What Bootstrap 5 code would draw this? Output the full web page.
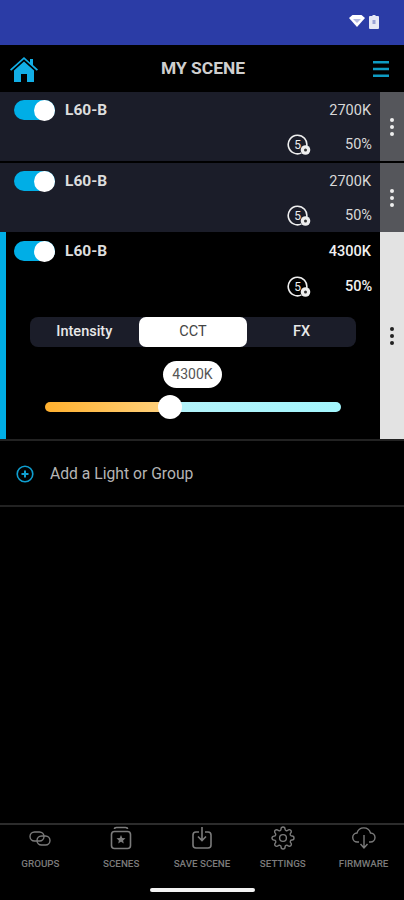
<!DOCTYPE html>
<html lang="en">
<head>
<meta charset="UTF-8">
<meta name="viewport" content="width=device-width, initial-scale=1.0">
<title>My Scene</title>
<link href="https://cdn.jsdelivr.net/npm/bootstrap@5.3.0/dist/css/bootstrap.min.css" rel="stylesheet">
<style>
    body { background: #000; font-family: Roboto, "Liberation Sans", sans-serif; color: #e4e4e4; height: 900px; overflow: hidden; }
    .app-shell { height: 900px; }
    .status-strip { height: 45px; background: #2b3ca6; padding: 15px 25px 0 0; gap: 4px; }
    .top-bar { height: 47px; padding: 0 15px 0 9px; }
    .top-title { font-size: 17.4px; font-weight: 700; color: #cfcfcf; margin-right: 6px; }
    .scene-row { height: 69px; background: #1b1d29; }
    .scene-row.first-row { margin-bottom: 2px; }
    .scene-row.open { height: 207px; background: #000; border-left: 6px solid #00aee6; }
    .row-main { min-width: 0; }
    .row-body { min-width: 0; padding: 8px 9px 0 14px; }
    .open .row-body { padding: 9px 9px 0 8px; }
    .row-line { height: 22px; }
    .row-line2 { height: 22px; margin-top: 12px; }
    .open .row-line2 { margin-top: 13px; }
    .light-name { font-size: 15.5px; font-weight: 700; color: #ddd; margin-left: 10px; }
    .light-val { font-size: 14.5px; color: #d8d8d8; }
    .open .light-val { color: #f0f0f0; font-weight: 500; }
    .val-pct { width: 26px; text-align: right; margin-left: 33px; white-space: nowrap; }
    .sw-track { width: 41px; height: 20px; border-radius: 10px; background: #00aee6; position: relative; top: -1px; }
    .sw-knob { position: absolute; right: 0; top: -0.5px; width: 21px; height: 21px; border-radius: 50%; background: #fff; }
    .more-col { width: 24px; background: #55565b; gap: 3px; }
    .more-col i { display: block; width: 4px; height: 4px; border-radius: 50%; background: #eee; }
    .open .more-col { background: #e3e3e3; }
    .open .more-col i { background: #222; }
    .tab-strip { height: 30px; margin: 19px 24px 0 24px; background: #1b1d29; border-radius: 8px; }
    .tab-item { flex: 1; font-size: 14.5px; font-weight: 500; color: #e8e8e8; border: 0; background: none; padding: 0; line-height: 30px; }
    .tab-item.on { background: #fff; color: #444; border-radius: 7px; font-weight: 400; }
    .cct-bubble { width: 59px; height: 27px; margin: 14px 0 0 157px; background: #fff; color: #555; border-radius: 14px; font-size: 14px; line-height: 27px; text-align: center; }
    .cct-slider { height: 10px; margin: 14px 39px 0 39px; border-radius: 5px; position: relative; background: linear-gradient(90deg, #ffb02e 0, #ffd27f 42%, #b4f3fa 42%, #a3f6fd 100%); }
    .cct-thumb { position: absolute; left: 113px; top: -7px; width: 24px; height: 24px; border-radius: 50%; background: #fff; }
    .add-row { height: 68px; padding: 1px 0 0 16px; border-top: 2px solid #222; border-bottom: 2px solid #222; font-size: 15.7px; color: #b5b5b5; gap: 16px; }
    .foot-bar { height: 77px; border-top: 2px solid #2c2c2c; padding-top: 1px; position: relative; }
    .foot-item { flex: 1; font-size: 9.8px; font-weight: 500; color: #7b7b7b; white-space: nowrap; gap: 7px; }
    .foot-item svg { height: 24px; }
    .gesture-pill { position: absolute; left: 150px; bottom: 8px; width: 105px; height: 4px; border-radius: 2px; background: #f2f2f2; }
</style>
</head>
<body>
<div class="app-shell d-flex flex-column">

    <div class="status-strip d-flex justify-content-end align-items-start">
        <svg width="16" height="12" viewBox="0 0 16 12"><path d="M0 3 3.500 0h9L16 3 8 12z" fill="#fff"/><path d="M4 4h8L8 8z" fill="#2b3ca6" opacity=".35"/></svg>
        <svg width="10" height="14" viewBox="0 0 10 14"><path d="M3.500 0h3v1H9a1 1 0 0 1 1 1v11a1 1 0 0 1-1 1H1a1 1 0 0 1-1-1V2a1 1 0 0 1 1-1h2.500z" fill="#e6e8f5"/><path d="M3.500 5h3v4h-3z" fill="#9aa3d6"/></svg>
    </div>

    <div class="top-bar d-flex align-items-center justify-content-between">
        <svg width="30" height="28" viewBox="0 0 30 28"><path d="M15 2 1 14.500l1.200 1.200L15 4.300l12.800 11.400 1.200-1.200-5-4.400V4h-3v3.600z" fill="#12aee6"/><path d="M5 15.500 15 6.500l10 9V27H18v-8h-6v8H5z" fill="#12aee6"/></svg>
        <div class="top-title">MY SCENE</div>
        <svg width="16" height="16" viewBox="0 0 16 16"><path d="M0 0h16v2.400H0zM0 6.800h16v2.400H0zM0 13.600h16V16H0z" fill="#0e9cc4"/></svg>
    </div>

    <div class="scene-row first-row d-flex">
        <div class="row-body flex-grow-1">
            <div class="row-line d-flex align-items-center">
                <div class="sw-track"><div class="sw-knob"></div></div>
                <span class="light-name">L60-B</span>
                <span class="light-val ms-auto">2700K</span>
            </div>
            <div class="row-line2 d-flex align-items-center justify-content-end">
                <svg width="25" height="22" viewBox="0 0 25 22"><path d="M14.500 18.900A9.300 9.300 0 1 1 19.700 12" fill="none" stroke="#eee" stroke-width="1.600"/><text x="10.500" y="15" font-size="12" font-family="Roboto" fill="#eee" text-anchor="middle">5</text><circle cx="18.500" cy="16" r="4.800" fill="#eee"/><circle cx="18.500" cy="16" r="1.500" fill="#333"/></svg>
                <span class="light-val val-pct">50%</span>
            </div>
        </div>
        <div class="more-col d-flex flex-column align-items-center justify-content-center"><i></i><i></i><i></i></div>
    </div>

    <div class="scene-row d-flex">
        <div class="row-body flex-grow-1">
            <div class="row-line d-flex align-items-center">
                <div class="sw-track"><div class="sw-knob"></div></div>
                <span class="light-name">L60-B</span>
                <span class="light-val ms-auto">2700K</span>
            </div>
            <div class="row-line2 d-flex align-items-center justify-content-end">
                <svg width="25" height="22" viewBox="0 0 25 22"><path d="M14.500 18.900A9.300 9.300 0 1 1 19.700 12" fill="none" stroke="#eee" stroke-width="1.600"/><text x="10.500" y="15" font-size="12" font-family="Roboto" fill="#eee" text-anchor="middle">5</text><circle cx="18.500" cy="16" r="4.800" fill="#eee"/><circle cx="18.500" cy="16" r="1.500" fill="#333"/></svg>
                <span class="light-val val-pct">50%</span>
            </div>
        </div>
        <div class="more-col d-flex flex-column align-items-center justify-content-center"><i></i><i></i><i></i></div>
    </div>

    <div class="scene-row open d-flex">
        <div class="row-main flex-grow-1">
            <div class="row-body">
                <div class="row-line d-flex align-items-center">
                    <div class="sw-track"><div class="sw-knob"></div></div>
                    <span class="light-name">L60-B</span>
                    <span class="light-val ms-auto">4300K</span>
                </div>
                <div class="row-line2 d-flex align-items-center justify-content-end">
                    <svg width="25" height="22" viewBox="0 0 25 22"><path d="M14.500 18.900A9.300 9.300 0 1 1 19.700 12" fill="none" stroke="#eee" stroke-width="1.600"/><text x="10.500" y="15" font-size="12" font-family="Roboto" fill="#eee" text-anchor="middle">5</text><circle cx="18.500" cy="16" r="4.800" fill="#eee"/><circle cx="18.500" cy="16" r="1.500" fill="#333"/></svg>
                    <span class="light-val val-pct">50%</span>
                </div>
            </div>
            <div class="tab-strip d-flex">
                <button class="tab-item">Intensity</button>
                <button class="tab-item on">CCT</button>
                <button class="tab-item">FX</button>
            </div>
            <div class="cct-bubble">4300K</div>
            <div class="cct-slider"><div class="cct-thumb"></div></div>
        </div>
        <div class="more-col d-flex flex-column align-items-center justify-content-center"><i></i><i></i><i></i></div>
    </div>

    <div class="add-row d-flex align-items-center">
        <svg width="18" height="18" viewBox="0 0 18 18"><circle cx="9" cy="9" r="7.800" fill="none" stroke="#0f9fd0" stroke-width="1.600"/><path d="M5.500 8h7v2h-7z" fill="#0f9fd0"/><path d="M8 5.500h2v7H8z" fill="#0f9fd0"/></svg>
        <span>Add a Light or Group</span>
    </div>

    <div class="flex-grow-1"></div>

    <div class="foot-bar d-flex">
        <div class="foot-item d-flex flex-column align-items-center">
            <svg width="24" height="24" viewBox="0 0 24 24" fill="none" stroke="#7b7b7b" stroke-width="1.400"><rect x="2" y="6" width="14" height="9" rx="4.500"/><rect x="9" y="10" width="13" height="9" rx="4.500"/></svg>
            <span>GROUPS</span>
        </div>
        <div class="foot-item d-flex flex-column align-items-center">
            <svg width="24" height="24" viewBox="0 0 24 24" fill="none" stroke="#7b7b7b" stroke-width="1.600"><rect x="2.500" y="5.500" width="19" height="17" rx="3"/><path d="M5.500 3c0-1 1-1.500 2-1.500h9c1 0 2 .5 2 1.500"/><path d="m12 9 1.300 3 3.200.3-2.400 2.100.7 3.100-2.800-1.700-2.800 1.700.7-3.100-2.400-2.100 3.200-.3z" fill="#7b7b7b" stroke="none"/></svg>
            <span>SCENES</span>
        </div>
        <div class="foot-item d-flex flex-column align-items-center">
            <svg width="24" height="24" viewBox="0 0 24 24" fill="none" stroke="#7b7b7b" stroke-width="1.600"><path d="M9 6H6a3 3 0 0 0-3 3v10a3 3 0 0 0 3 3h12a3 3 0 0 0 3-3V9a3 3 0 0 0-3-3h-3"/><path d="M12 1v13M8 10.500l4 4 4-4"/></svg>
            <span>SAVE SCENE</span>
        </div>
        <div class="foot-item d-flex flex-column align-items-center">
            <svg width="24" height="24" viewBox="0 0 24 24" fill="none" stroke="#7b7b7b" stroke-width="1.400"><circle cx="12" cy="12" r="3.400"/><path d="M19.400 15a1.650 1.650 0 0 0 .33 1.820l.06.06a2 2 0 0 1 0 2.830 2 2 0 0 1-2.830 0l-.06-.06a1.650 1.650 0 0 0-1.820-.33 1.650 1.650 0 0 0-1 1.510V21a2 2 0 0 1-2 2 2 2 0 0 1-2-2v-.09A1.650 1.650 0 0 0 9 19.400a1.650 1.650 0 0 0-1.820.33l-.06.06a2 2 0 0 1-2.830 0 2 2 0 0 1 0-2.830l.06-.06a1.650 1.650 0 0 0 .33-1.820 1.650 1.650 0 0 0-1.510-1H3a2 2 0 0 1-2-2 2 2 0 0 1 2-2h.09A1.650 1.650 0 0 0 4.600 9a1.650 1.650 0 0 0-.33-1.820l-.06-.06a2 2 0 0 1 0-2.830 2 2 0 0 1 2.830 0l.06.06a1.650 1.650 0 0 0 1.820.33H9a1.650 1.650 0 0 0 1-1.510V3a2 2 0 0 1 2-2 2 2 0 0 1 2 2v.09a1.650 1.650 0 0 0 1 1.510 1.650 1.650 0 0 0 1.820-.33l.06-.06a2 2 0 0 1 2.830 0 2 2 0 0 1 0 2.830l-.06.06a1.650 1.650 0 0 0-.33 1.820V9a1.650 1.650 0 0 0 1.510 1H21a2 2 0 0 1 2 2 2 2 0 0 1-2 2h-.09a1.650 1.650 0 0 0-1.510 1z"/></svg>
            <span>SETTINGS</span>
        </div>
        <div class="foot-item d-flex flex-column align-items-center">
            <svg width="24" height="24" viewBox="0 0 24 24" fill="none" stroke="#7b7b7b" stroke-width="1.400"><path d="M7 16H5.500a4.500 4.500 0 0 1-.5-9 7 7 0 0 1 13.500 0 4.500 4.500 0 0 1 0 9H17"/><path d="M12 9v13M8.500 18l3.500 4 3.500-4"/></svg>
            <span>FIRMWARE</span>
        </div>
        <div class="gesture-pill"></div>
    </div>
</div>
<script src="https://cdn.jsdelivr.net/npm/bootstrap@5.3.0/dist/js/bootstrap.bundle.min.js"></script>
</body>
</html>
